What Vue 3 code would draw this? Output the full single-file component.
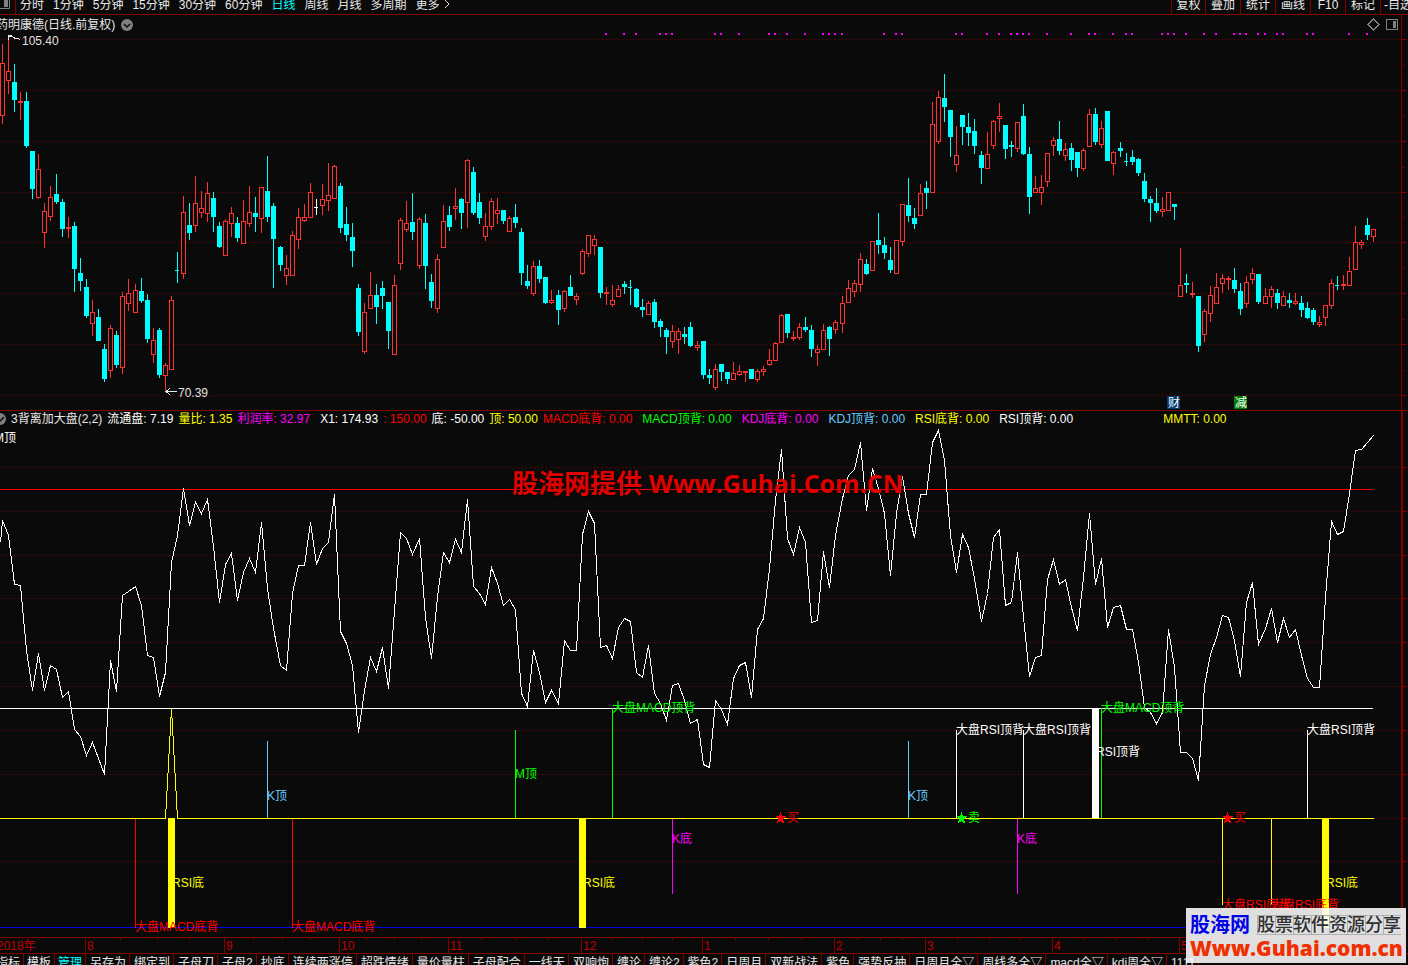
<script setup>
const periods = ['分时', '1分钟', '5分钟', '15分钟', '30分钟', '60分钟', '日线', '周线', '月线', '多周期', '更多']
const actions = ['复权', '叠加', '统计', '画线', 'F10', '标记', '-自选']
const tabs = [
  '指标', '模板', '管理', '另存为', '绑定到', '子母刀', '子母2', '抄底', '连续两涨停', '超跌情绪', '量价量柱',
  '子母配合', '一线天', '双响炮', '缠论', '缠论2', '紫色2', '日周月', '双新战法', '紫色', '强势反抽',
  '日周月全▽', '周线多全▽', 'macd全▽', 'kdj周全▽', '1111'
]
const legend = [
  { t: '流通盘: 7.19', c: 'white' },
  { t: '量比: 1.35', c: 'yellow' },
  { t: '利润率: 32.97', c: 'magenta' },
  { t: 'X1: 174.93', c: 'white', wide: true },
  { t: ': 150.00', c: 'red' },
  { t: '底: -50.00', c: 'white' },
  { t: '顶: 50.00', c: 'yellow' },
  { t: 'MACD底背: 0.00', c: 'red' },
  { t: 'MACD顶背: 0.00', c: 'lime', wide: true },
  { t: 'KDJ底背: 0.00', c: 'magenta', wide: true },
  { t: 'KDJ顶背: 0.00', c: 'sky', wide: true },
  { t: 'RSI底背: 0.00', c: 'yellow', wide: true },
  { t: 'RSI顶背: 0.00', c: 'white', wide: true },
  { t: 'MMTT: 0.00', c: 'yellow', far: true }
]

// x of the n-th trading day
const dayX = n => 2 + 6 * n + Math.floor((n + 1.55) / 23.3)

// high, body top, body bottom, low, kind (r = up, c = down, w = flat)
const raw = `44 63 116 124 r|38 71 81 94 r|64 82 100 112 c|92 101 103 120 r|92 101 146 148 c|151 151 189 199 c|154 169 198 199 r|203 211 233 248 r|186 197 217 221 r|174 194 202 204 c
199 202 229 237 c|217 227 229 238 r|222 226 269 292 c|258 273 281 291 c|279 287 316 318 c|300 312 324 336 r|309 317 341 341 c|344 349 379 382 c|325 328 371 378 r|331 335 365 368 c
292 296 368 374 r|279 293 304 311 r|284 290 313 313 r|278 291 301 303 c|294 300 339 343 c|328 340 355 363 r|328 330 375 378 c|363 365 376 390 r|296 300 370 370 r|252 270 271 283 c
196 212 274 279 r|203 225 233 240 c|176 203 226 232 r|191 208 213 218 r|182 193 214 222 r|192 198 217 232 c|222 226 247 248 c|219 221 256 256 r|207 213 224 237 r|217 223 238 242 c
200 221 244 244 r|186 212 224 227 r|197 213 217 232 c|187 187 219 233 r|156 191 217 222 c|203 206 239 288 c|246 247 265 271 c|255 268 276 285 r|231 235 276 276 r|208 217 240 249 r
204 217 221 222 r|183 192 218 218 r|199 207 208 215 w|184 199 206 215 r|163 195 201 211 r|165 166 199 199 r|183 186 228 233 c|207 224 235 241 c|223 237 251 267 c|284 288 332 336 c
303 312 352 354 r|272 295 309 309 r|284 295 307 324 c|281 288 296 309 c|302 302 331 349 c|275 285 355 355 r|218 220 264 270 r|201 223 230 232 r|193 222 232 240 c|217 219 266 269 r
214 223 266 289 c|274 282 301 308 c|254 259 309 313 r|205 221 248 248 r|206 215 227 231 c|188 206 209 220 r|198 199 213 229 c|159 160 203 228 r|167 172 213 215 c|193 202 218 224 c
213 226 237 241 r|198 201 227 230 r|198 210 214 224 r|210 210 221 224 c|216 218 232 232 r|204 217 223 228 c|228 232 273 285 c|265 281 286 289 c|261 266 294 296 r|260 266 279 283 c
277 277 303 304 c|290 300 303 304 r|290 295 310 325 c|290 291 309 312 r|275 287 296 296 c|293 296 300 305 r|249 251 274 275 r|235 235 254 257 r|235 239 246 255 r|247 247 293 298 c
287 292 294 305 r|285 300 305 307 r|285 289 297 297 r|281 284 287 294 c|280 287 288 305 c|288 289 307 308 c|299 307 310 317 c|301 303 315 315 r|299 302 322 328 c|319 321 327 337 c
328 330 337 354 c|325 331 342 348 r|328 331 340 354 r|327 334 337 344 c|322 327 346 347 c|341 345 348 351 r|341 341 375 379 c|369 375 378 384 c|364 369 388 390 r|364 364 372 381 c
372 372 379 384 c|362 373 380 380 r|365 371 375 376 r|371 371 373 382 r|369 369 379 379 c|369 371 380 382 r|366 369 372 376 r|349 360 365 366 r|342 343 361 361 r|314 315 343 343 r
314 314 333 338 c|331 337 339 341 r|323 327 338 340 r|317 327 330 332 c|325 330 349 357 c|345 349 353 366 r|324 330 350 350 r|326 327 339 356 c|320 322 330 334 r|296 303 324 333 r
280 288 303 303 r|280 283 292 297 r|253 259 285 292 r|259 264 274 275 c|241 241 271 271 r|213 240 245 254 c|237 245 253 259 c|247 260 270 273 c|240 240 274 274 r|204 204 242 246 r
178 205 216 222 c|208 218 224 229 c|184 193 216 216 r|181 188 193 209 c|102 124 193 193 r|91 97 142 144 r|74 98 107 122 c|110 110 137 157 c|126 155 165 172 r|115 115 127 145 c
113 127 133 146 c|119 131 146 154 c|151 155 168 184 c|132 154 169 169 r|120 121 146 149 r|103 116 119 132 r|125 125 149 159 c|141 145 147 157 c|122 122 149 152 r|104 116 154 155 c
147 154 197 214 c|176 188 193 193 r|175 187 193 205 r|153 153 182 187 r|137 140 146 156 r|121 139 151 155 c|143 149 156 161 r|143 148 160 171 c|152 152 168 177 c|148 150 169 171 r
109 114 147 147 r|108 114 142 145 c|121 128 145 148 r|111 111 161 161 c|151 152 164 175 r|142 148 151 157 c|153 161 162 166 c|150 157 162 165 c|158 159 173 176 c|173 181 199 202 c
196 199 203 222 c|188 203 211 213 c|197 209 212 217 r|192 192 211 211 r|204 204 207 220 c|248 285 297 297 r|274 283 285 293 c|282 293 295 298 r|296 296 346 352 c|309 311 335 342 r
286 295 314 322 r|273 287 304 304 r|274 278 284 293 r|276 278 280 290 r|268 280 289 293 c|283 291 309 315 c|276 282 304 308 r|268 273 280 284 r|274 274 302 304 c|288 296 304 304 r
286 289 297 308 r|289 293 303 309 c|291 296 306 306 r|293 300 303 308 c|293 301 304 305 r|296 303 310 317 c|302 308 318 319 c|308 310 322 325 c|316 322 325 327 r|305 305 318 326 r
279 283 306 309 r|276 285 286 290 c|275 284 286 290 r|257 271 286 286 r|226 242 270 270 r|240 242 245 249 r|218 225 235 240 c|229 229 237 242 r`
const candles = raw.split(/[|\n]/).map((row, i) => {
  const [h, t, b, l, k] = row.trim().split(' ')
  return { x: dayX(i), h: +h, t: +t, b: +b, l: +l, k }
})

const values = [
  520, 535, 584, 585, 650, 690, 653, 690, 665, 669, 697, 691, 729, 736, 755, 742, 758, 774, 660, 691,
  595, 591, 586, 605, 655, 657, 696, 672, 562, 535, 488, 525, 502, 513, 499, 546, 602, 564, 553, 600,
  572, 558, 572, 522, 588, 628, 665, 670, 593, 565, 565, 522, 564, 548, 542, 494, 631, 643, 665, 732,
  690, 657, 671, 647, 688, 610, 532, 538, 554, 538, 617, 658, 596, 552, 562, 539, 552, 499, 586, 593,
  604, 567, 583, 605, 599, 609, 693, 706, 650, 672, 702, 690, 703, 640, 650, 650, 534, 511, 523, 647,
  645, 658, 627, 618, 621, 672, 677, 645, 693, 703, 720, 685, 683, 700, 723, 719, 764, 767, 700, 709,
  724, 678, 665, 662, 697, 629, 618, 568, 500, 449, 538, 554, 527, 542, 622, 620, 551, 587, 535, 498,
  475, 469, 442, 510, 468, 488, 513, 575, 513, 476, 513, 537, 494, 494, 442, 430, 460, 535, 572, 534,
  547, 578, 621, 593, 537, 529, 605, 602, 552, 617, 676, 657, 655, 579, 559, 584, 579, 607, 630, 577,
  513, 584, 558, 627, 607, 605, 629, 629, 662, 707, 712, 723, 712, 629, 667, 752, 752, 758, 780, 685,
  654, 637, 615, 617, 640, 676, 602, 582, 644, 628, 608, 642, 618, 637, 629, 655, 678, 687, 687, 597,
  521, 534, 531, 493, 450, 449, 442, 435
]
const curve = '0,542 ' + values.map((v, i) => `${dayX(i)},${v}`).join(' ')

const dots = [
  605, 623, 635, 659, 665, 671, 714, 720, 738, 768, 774, 786, 804, 822, 828, 834, 841, 883, 895, 901,
  955, 961, 986, 998, 1010, 1016, 1022, 1028, 1046, 1070, 1088, 1094, 1112, 1125, 1131, 1161, 1167, 1173,
  1185, 1203, 1215, 1233, 1239, 1245, 1257, 1264, 1276, 1282, 1306, 1312, 1348, 1366
]
const priceGrid = [39, 90, 141, 192, 242, 293, 344, 395]
const priceTicks = [65, 116, 167, 217, 268, 319, 370]
const lowerGrid = [467, 511, 555, 598, 642, 686, 730, 774, 818, 861]
const lowerTicks = [489, 533, 577, 620, 664, 708, 752, 796, 840, 883]

const stems = [
  { x: 135, y: 819, h: 109, c: 'red' },
  { x: 292, y: 819, h: 109, c: 'red' },
  { x: 267, y: 741, h: 77, c: 'sky' },
  { x: 515, y: 730, h: 88, c: 'lime' },
  { x: 612, y: 708, h: 110, c: 'lime' },
  { x: 672, y: 819, h: 75, c: 'magenta' },
  { x: 908, y: 741, h: 77, c: 'sky' },
  { x: 956, y: 730, h: 88, c: 'white' },
  { x: 1023, y: 730, h: 88, c: 'white' },
  { x: 1101, y: 708, h: 110, c: 'lime' },
  { x: 1017, y: 819, h: 75, c: 'magenta' },
  { x: 1222, y: 819, h: 86, c: 'yellow' },
  { x: 1271, y: 819, h: 86, c: 'yellow' },
  { x: 1307, y: 730, h: 88, c: 'white' }
]
const marks = [
  { x: -6, y: 442, t: 'M顶', c: 'white' },
  { x: 172, y: 887, t: 'RSI底', c: 'yellow' },
  { x: 583, y: 887, t: 'RSI底', c: 'yellow' },
  { x: 1326, y: 887, t: 'RSI底', c: 'yellow' },
  { x: 135, y: 931, t: '大盘MACD底背', c: 'red' },
  { x: 292, y: 931, t: '大盘MACD底背', c: 'red' },
  { x: 267, y: 800, t: 'K顶', c: 'sky' },
  { x: 908, y: 800, t: 'K顶', c: 'sky' },
  { x: 515, y: 778, t: 'M顶', c: 'lime' },
  { x: 612, y: 712, t: '大盘MACD顶背', c: 'lime' },
  { x: 1101, y: 712, t: '大盘MACD顶背', c: 'lime' },
  { x: 672, y: 843, t: 'K底', c: 'magenta' },
  { x: 1017, y: 843, t: 'K底', c: 'magenta' },
  { x: 956, y: 734, t: '大盘RSI顶背', c: 'white' },
  { x: 1023, y: 734, t: '大盘RSI顶背', c: 'white' },
  { x: 1307, y: 734, t: '大盘RSI顶背', c: 'white' },
  { x: 1096, y: 756, t: 'RSI顶背', c: 'white' },
  { x: 1222, y: 909, t: '大盘RSI底背', c: 'red' },
  { x: 1271, y: 909, t: '大盘RSI底背', c: 'red' },
  { x: 787, y: 822, t: '买', c: 'red' },
  { x: 968, y: 822, t: '卖', c: 'lime' },
  { x: 1234, y: 822, t: '买', c: 'red' }
]
const stars = [{ x: 775, c: 'red' }, { x: 956, c: 'lime' }, { x: 1222, c: 'red' }]

const months = [
  { x: 85, t: '8' }, { x: 224, t: '9' }, { x: 339, t: '10' }, { x: 448, t: '11' }, { x: 581, t: '12' },
  { x: 702, t: '1' }, { x: 834, t: '2' }, { x: 925, t: '3' }, { x: 1052, t: '4' }, { x: 1179, t: '5' }
]
const weeks = [
  120, 157, 189, 253, 282, 310, 366, 394, 421, 481, 515, 548, 611, 642, 672, 735, 768, 801,
  857, 880, 902, 957, 989, 1020, 1084, 1116, 1147
]
</script>

<template>
  <main class="app">
    <header class="toolbar">
      <button class="dock" aria-label="侧栏">
        <svg width="10" height="9" viewBox="0 0 10 9"><path d="M0 8.5H9.5V0" fill="none" stroke="#808080" /><path d="M4 0H8V7H4Z" fill="#808080" /></svg>
      </button>
      <nav class="periods">
        <button v-for="p in periods" :key="p" :class="{ active: p === '日线' }">{{ p }}</button>
        <svg class="more" width="6" height="10" viewBox="0 0 6 10"><path d="M1 1L5 5L1 9" fill="none" stroke="#e0e0e0" /></svg>
      </nav>
      <div class="actions">
        <button v-for="a in actions" :key="a">{{ a }}</button>
      </div>
    </header>

    <section class="panel">
      <div class="caption">
        <h1>药明康德(日线.前复权)</h1>
        <button class="fold" aria-label="展开">
          <svg width="12" height="12" viewBox="0 0 12 12"><circle cx="6" cy="6" r="6" fill="#808080" /><path d="M3 5L6 8L9 5" fill="none" stroke="#0a0a0a" stroke-width="1.5" /></svg>
        </button>
      </div>
      <svg class="chart" viewBox="0 15 1408 395">
        <line v-for="y in priceGrid" :key="y" class="grid" x1="2" x2="1401" :y1="y + 0.5" :y2="y + 0.5" />
        <rect class="axis" x="1401" y="15" width="1" height="395" />
        <rect v-for="y in priceGrid" :key="'a' + y" class="axis" x="1402" :y="y" width="5" height="1" />
        <rect v-for="y in priceTicks" :key="'b' + y" class="axis" x="1402" :y="y" width="2" height="1" />
        <rect v-for="d in dots" :key="d" class="magenta" :x="d" y="33" width="2" height="2" />
        <g v-for="c in candles" :key="c.x" :class="c.k">
          <rect :x="c.x" :y="c.h" width="1" :height="c.t - c.h" />
          <rect :x="c.x" :y="c.b" width="1" :height="c.l - c.b" />
          <rect v-if="c.k !== 'r' || c.b - c.t < 3" :x="c.x - 2" :y="c.t" :width="c.k === 'w' || c.b - c.t === 1 ? 4 : 5" :height="c.b - c.t" />
          <rect v-else class="hollow" :x="c.x - 1.5" :y="c.t + 0.5" width="4" :height="c.b - c.t - 1" />
        </g>
        <path class="pointer" d="M8.5 40V35.5H12M9 36.5H12.5L15 38.5H18L20 39.5" />
        <text class="value" x="22" y="45">105.40</text>
        <path class="pointer" d="M165 391.5H177M170 388L166 391.5L170 395" />
        <text class="value" x="178" y="397">70.39</text>
        <rect x="1167" y="396" width="13" height="13" fill="#003870" />
        <text class="white" x="1168" y="407">财</text>
        <rect x="1234" y="396" width="13" height="13" fill="#008000" />
        <text class="white" x="1235" y="407">减</text>
        <path d="M1373.5 19L1379 24.5L1373.5 30L1368 24.5Z" class="tool" />
        <rect x="1386.5" y="19.5" width="11" height="10" rx="1" class="tool" />
        <rect x="1393" y="21" width="3" height="7" fill="#808080" />
      </svg>
    </section>

    <section class="panel lower">
      <div class="legend">
        <button class="fold" aria-label="指标">
          <svg width="7" height="12" viewBox="0 0 7 12"><circle cx="1" cy="6" r="6" fill="#808080" /><path d="M-2 5L1 8L5 4" fill="none" stroke="#0a0a0a" stroke-width="1.5" /></svg>
        </button>
        <h2>3背离加大盘(2,2)</h2>
        <span v-for="l in legend" :key="l.t" :class="[l.c, { wide: l.wide, far: l.far }]">{{ l.t }}</span>
      </div>
      <svg class="chart" viewBox="0 411 1408 542">
        <line v-for="y in lowerGrid" :key="y" class="grid" x1="2" x2="1401" :y1="y + 0.5" :y2="y + 0.5" />
        <rect class="axis" x="1401" y="411" width="2" height="542" />
        <rect v-for="y in lowerGrid" :key="'a' + y" class="axis" x="1403" :y="y" width="4" height="1" />
        <rect v-for="y in lowerTicks" :key="'b' + y" class="axis" x="1403" :y="y" width="1" height="1" />
        <rect class="red" x="0" y="489" width="1373" height="1" />
        <rect class="white" x="0" y="708" width="1373" height="1" />
        <rect x="0" y="927" width="1401" height="1" fill="#0000e0" />
        <polyline class="curve" :points="curve" transform="translate(0.5 0.5)" />
        <rect v-for="s in stems" :key="s.x" :class="s.c" :x="s.x" :y="s.y" width="1" :height="s.h" />
        <path class="zero" d="M0 818.5H165.5L171.5 708.5L177.5 818.5H1374" />
        <rect class="yellow" x="168" y="818" width="7" height="110" />
        <rect class="yellow" x="579" y="818" width="7" height="110" />
        <rect class="yellow" x="1322" y="818" width="7" height="110" />
        <rect class="white" x="1092" y="708" width="7" height="110" />
        <text v-for="(m, i) in marks" :key="i" :class="m.c" :x="m.x" :y="m.y">{{ m.t }}</text>
        <path v-for="s in stars" :key="s.x" :class="s.c" :transform="`translate(${s.x} 812)`" d="M5.5 0L7 4H11L8 7L9.500 12L5.500 9L1.500 12L3 7L0 4H4Z" />
        <rect class="axis" x="0" y="937" width="1401" height="1" />
        <rect v-for="m in months" :key="m.x" class="axis" :x="m.x" y="938" width="1" height="15" />
        <rect v-for="w in weeks" :key="w" class="axis" :x="w" y="938" width="1" height="2" />
        <text class="month" x="-3" y="950">2018年</text>
        <text v-for="m in months" :key="'t' + m.x" class="month" :x="m.x + 2" y="950">{{ m.t }}</text>
      </svg>
      <p class="banner">股海网提供 <span>Www.Guhai.Com.CN</span></p>
    </section>

    <nav class="tabs">
      <button v-for="(t, i) in tabs" :key="t" :class="{ active: t === '管理', lead: i < 3 }">{{ t }}</button>
    </nav>

    <aside class="stamp">
      <div class="stamp-row">
        <strong>股海网</strong>
        <span>股票软件资源分享</span>
      </div>
      <b>Www.Guhai.com.cn</b>
    </aside>
  </main>
</template>

<style>
body {
  background: #0a0a0a;
}
</style>

<style scoped>
.app {
  position: relative;
  height: 100vh;
  overflow: hidden;
  display: flex;
  flex-direction: column;
  background: #0a0a0a;
  color: #e8e8e8;
  font: 12px/18px "Liberation Sans", "Noto Sans CJK SC", sans-serif;
  white-space: nowrap;
}
button {
  flex: none;
  margin: 0;
  padding: 0;
  border: 0;
  background: none;
  color: inherit;
  font: inherit;
}
h1,
h2,
p {
  margin: 0;
  font: inherit;
}
svg {
  display: block;
}
.toolbar {
  flex: none;
  display: flex;
  align-items: flex-end;
  height: 14px;
  overflow: hidden;
  border-bottom: 1px solid #800000;
}
.dock {
  width: 16px;
  height: 14px;
  border-right: 1px solid #800000;
}
.dock svg {
  margin-bottom: 5px;
}
.periods {
  display: flex;
  gap: 9px;
  margin-left: 4px;
}
.periods .active,
.tabs .active {
  color: #00ffff;
}
.more {
  margin: 3px 0 0 -5px;
}
.actions {
  display: flex;
  margin-left: auto;
  width: 237px;
}
.actions button {
  box-sizing: border-box;
  width: 35px;
  border-left: 1px solid #800000;
}
.actions button:first-child {
  width: 34px;
}
.panel {
  flex: none;
  position: relative;
}
.chart {
  width: 100%;
  height: auto;
  shape-rendering: crispEdges;
}
.caption {
  position: absolute;
  top: 1px;
  left: -4px;
  display: flex;
  align-items: center;
  gap: 6px;
}
.lower {
  border-top: 1px solid #800000;
}
.legend {
  position: absolute;
  top: -1px;
  left: -1px;
  display: flex;
  align-items: center;
  gap: 5px;
}
.legend .wide {
  margin-left: 5px;
}
.legend .far {
  margin-left: 85px;
}
.grid {
  stroke: #900000;
  stroke-dasharray: 1 3;
}
.axis {
  fill: #800000;
}
.r {
  fill: #ff3232;
}
.c {
  fill: #00ffff;
}
.w {
  fill: #ffffff;
}
.hollow {
  fill: #0a0a0a;
  stroke: #ff3232;
}
.pointer {
  fill: none;
  stroke: #e8e8e8;
}
.tool {
  fill: none;
  stroke: #808080;
}
.value {
  fill: #e0e0e0;
}
.month {
  fill: #c00000;
}
.curve {
  fill: none;
  stroke: #ffffff;
}
.zero {
  fill: none;
  stroke: #ffff00;
}
.white {
  fill: #ffffff;
  color: #ffffff;
}
.yellow {
  fill: #ffff00;
  color: #ffff00;
}
.magenta {
  fill: #ff00ff;
  color: #ff00ff;
}
.red {
  fill: #ff0000;
  color: #ff0000;
}
.lime {
  fill: #00ff00;
  color: #00ff00;
}
.sky {
  fill: #66ccff;
  color: #66ccff;
}
.banner {
  position: absolute;
  top: 54px;
  left: 512px;
  color: #e00000;
  font: bold 26px/36px "Open Sans", "Noto Sans CJK SC", sans-serif;
  text-shadow: 1px 1px 2px #000000;
}
.banner span {
  font-size: 25px;
}
.tabs {
  flex: none;
  display: flex;
  margin-left: -7px;
  border-top: 1px solid #800000;
}
.tabs button {
  padding: 0 3px 0 4px;
  border-right: 1px solid #800000;
}
.tabs .lead {
  padding-left: 3px;
}
.stamp {
  position: absolute;
  right: 2px;
  bottom: 2px;
  box-sizing: border-box;
  width: 220px;
  height: 55px;
  padding: 5px 5px 0 4px;
  background: rgba(255, 255, 255, 0.87);
}
.stamp-row {
  display: flex;
  align-items: center;
  justify-content: space-between;
  line-height: 24px;
}
.stamp strong {
  color: #0000e6;
  font-size: 20px;
}
.stamp span {
  color: #303030;
  font-size: 18px;
  font-weight: 500;
  line-height: 18px;
  background: repeating-linear-gradient(90deg, #b0b0b0 0 1px, transparent 1px 18px);
  border: solid #b0b0b0;
  border-width: 1px 0;
}
.stamp b {
  display: block;
  color: #f03000;
  font: 800 21px/22px "Open Sans", sans-serif;
}
</style>
